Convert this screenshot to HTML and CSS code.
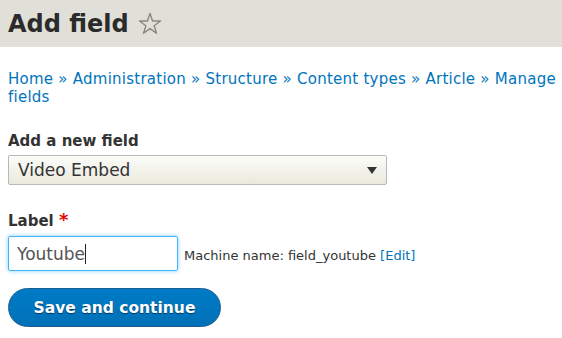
FILE: index.html
```html
<!DOCTYPE html>
<html lang="en">
<head>
    <meta charset="UTF-8">
    <title>Add field</title>
    <link rel="stylesheet" href="styles.css">
</head>
<body>
    <div class="page-header">
        <h1>Add field</h1>
        <svg class="star" width="24" height="24" viewBox="0 0 24 24">
            <polygon points="12,1.5 14.6,9 22.5,9 16.1,13.7 18.5,21.3 12,16.6 5.5,21.3 7.9,13.7 1.5,9 9.4,9" fill="none" stroke="#888880" stroke-width="1.4" stroke-linejoin="round"/>
        </svg>
    </div>

    <div class="content">
        <nav class="breadcrumb">
            <a href="#">Home</a> » <a href="#">Administration</a> » <a href="#">Structure</a> » <a href="#">Content types</a> » <a href="#">Article</a> » <a href="#">Manage fields</a>
        </nav>

        <div class="form-item">
            <label>Add a new field</label>
            <div class="select">
                <span>Video Embed</span>
                <span class="arrow"></span>
            </div>
        </div>

        <div class="form-item">
            <label class="label-required">Label <span class="required">*</span></label>
            <div class="label-row">
                <div class="text-input">Youtube<span class="caret"></span></div>
                <span class="machine-name">Machine name: field_youtube <a href="#">[Edit]</a></span>
            </div>
        </div>

        <button class="button-primary" type="button">Save and continue</button>
    </div>
</body>
</html>
```

FILE: styles.css
```css
body {
    margin: 0;
    font-family: "DejaVu Sans", Verdana, sans-serif;
    color: #333;
    background: #fff;
}
.page-header {
    background-color: #e0e0d8;
    height: 47px;
    display: flex;
    align-items: center;
    padding: 0 8px;
}
h1 {
    margin: 0;
    font-size: 24px;
    font-weight: bold;
    color: #2b2b2b;
}
.star {
    margin-left: 9px;
}
.content {
    padding: 21px 0 0 8px;
}
.breadcrumb {
    font-size: 15px;
    line-height: 18px;
    letter-spacing: 0.25px;
    color: #0074bd;
    padding-top: 2px;
    margin-bottom: 26px;
}
.breadcrumb a {
    color: #0074bd;
    text-decoration: none;
}
.form-item {
    margin-bottom: 24px;
}
.form-item label {
    display: block;
    font-size: 15px;
    font-weight: bold;
    color: #333;
    margin-bottom: 5px;
}
.form-item .label-required {
    margin-bottom: 6px;
}
.required {
    color: #e00c00;
    font-size: 18px;
}
.select {
    width: 379px;
    height: 30px;
    box-sizing: border-box;
    border: 1px solid #b8b8b8;
    border-radius: 2px;
    background: linear-gradient(#fcfcfa, #e9e9dd);
    display: flex;
    align-items: center;
    justify-content: space-between;
    padding: 0 9px;
    font-size: 17px;
    color: #333;
}
.arrow {
    width: 0;
    height: 0;
    border-left: 5px solid transparent;
    border-right: 5px solid transparent;
    border-top: 7px solid #333;
}
.label-row {
    display: flex;
    align-items: center;
}
.text-input {
    width: 170px;
    height: 35px;
    box-sizing: border-box;
    border: 1px solid #40b6ff;
    border-radius: 2px;
    box-shadow: 0 0 4px #84cfff;
    padding: 0 8px;
    font-size: 17px;
    color: #555;
    display: flex;
    align-items: center;
}
.caret {
    display: inline-block;
    width: 1px;
    height: 20px;
    background: #222;
}
.machine-name {
    font-size: 13px;
    margin-left: 6px;
    margin-top: 4px;
    color: #333;
}
.machine-name a {
    color: #0074bd;
    text-decoration: none;
}
.button-primary {
    width: 213px;
    height: 39px;
    margin-top: -7px;
    border: 1px solid #1e5c90;
    border-radius: 20px;
    background: linear-gradient(#007bc6, #0071b8);
    color: #fff;
    font-family: "DejaVu Sans", Verdana, sans-serif;
    font-size: 15.5px;
    font-weight: bold;
    text-shadow: 0 1px 1px rgba(0,0,0,0.5);
}
```
